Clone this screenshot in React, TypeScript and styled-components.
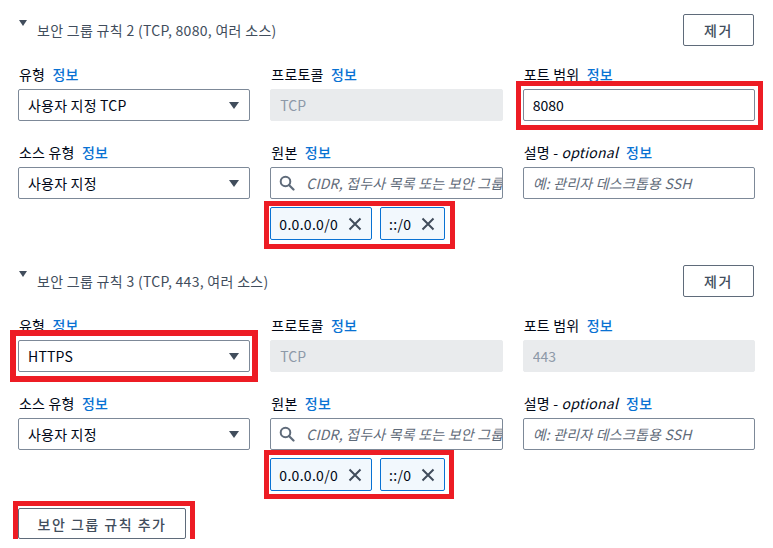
import React from "react";
import styled, { createGlobalStyle } from "styled-components";

const GlobalStyle = createGlobalStyle`
  html, body { margin: 0; padding: 0; background: #ffffff; }
  body {
    font-family: "Noto Sans CJK KR", "Noto Sans", sans-serif;
    color: #000716;
    -webkit-font-smoothing: antialiased;
  }
  * { box-sizing: border-box; }
`;

const Page = styled.div`
  width: 773px;
  padding: 14px 18px 0 18px;
`;

const Rule = styled.section<{ $top?: number }>`
  margin-top: ${(p) => p.$top ?? 0}px;
`;

const RuleHeader = styled.div`
  display: flex;
  align-items: center;
  justify-content: space-between;
  height: 32px;
`;

const TitleGroup = styled.div`
  display: flex;
  align-items: flex-start;
  gap: 10px;
  margin-left: 1px;
`;

const CaretIcon = styled.svg`
  display: block;
  flex: none;
  margin-top: 1px;
`;

const Title = styled.span`
  font-size: 14px;
  line-height: 22px;
  letter-spacing: 0.3px;
  color: #414d5c;
`;

const OutlineButton = styled.button`
  height: 32px;
  padding: 0;
  border: 1px solid #5f6b7a;
  border-radius: 2px;
  background: #ffffff;
  font-family: inherit;
  font-size: 14px;
  font-weight: 500;
  letter-spacing: 1.5px;
  word-spacing: 0px;
  white-space: nowrap;
  color: #414d5c;
  display: inline-flex;
  align-items: center;
  justify-content: center;
`;

const RemoveButton = styled(OutlineButton)`
  margin-right: 1px;
  width: 71px;
`;

const AddButton = styled(OutlineButton)`
  width: 168px;
  height: 31px;
`;

const FieldGrid = styled.div<{ $top: number }>`
  display: grid;
  grid-template-columns: repeat(3, 1fr);
  column-gap: 20px;
  margin-top: ${(p) => p.$top}px;
  align-items: start;
`;

const Field = styled.div`
  display: flex;
  flex-direction: column;
  min-width: 0;
`;

const Label = styled.div`
  font-size: 14px;
  line-height: 20px;
  margin-bottom: 5px;
  color: #000716;
  white-space: nowrap;
  margin-left: 1px;
  letter-spacing: 0.2px;
`;

const Optional = styled.i`
  font-style: italic;
  margin-right: 4px;
`;

const InfoLink = styled.a`
  color: #0972d3;
  font-weight: 500;
  text-decoration: none;
  margin-left: 4px;
`;

const Highlight = styled.div<{
  $t: number;
  $r: number;
  $b: number;
  $l: number;
  $w?: number;
  $fit?: boolean;
  $top?: number;
}>`
  position: relative;
  align-self: ${(p) => (p.$fit ? "flex-start" : "stretch")};
  margin-top: ${(p) => p.$top ?? 0}px;
  &::after {
    content: "";
    position: absolute;
    top: -${(p) => p.$t}px;
    right: -${(p) => p.$r}px;
    bottom: -${(p) => p.$b}px;
    left: -${(p) => p.$l}px;
    border: ${(p) => p.$w ?? 5}px solid #ed1c24;
    pointer-events: none;
  }
`;

const SelectBox = styled.div`
  height: 32px;
  border: 1px solid #7d8998;
  border-radius: 2px;
  background: #ffffff;
  padding: 0 10px 0 9px;
  display: flex;
  align-items: center;
  justify-content: space-between;
  font-size: 14px;
  letter-spacing: 0.2px;
  color: #000716;
`;

const ArrowIcon = styled.svg`
  display: block;
  flex: none;
`;

const TextInput = styled.input`
  display: block;
  width: 100%;
  height: 32px;
  border: 1px solid #7d8998;
  border-radius: 2px;
  background: #ffffff;
  padding: 0 9px;
  font-family: inherit;
  font-size: 14px;
  color: #000716;
  outline: none;
  &::placeholder {
    color: #5f6b7a;
    font-style: italic;
    letter-spacing: 0.2px;
  }
  &:disabled {
    background: #e9ebed;
    border-color: #e9ebed;
    color: #8d99a8;
  }
`;

const SearchBox = styled.div`
  height: 32px;
  border: 1px solid #7d8998;
  border-radius: 2px;
  background: #ffffff;
  padding: 0 0 0 8px;
  display: flex;
  align-items: center;
  gap: 11px;
  overflow: hidden;
`;

const SearchField = styled.input`
  flex: 1;
  min-width: 0;
  border: none;
  outline: none;
  padding: 0;
  height: 30px;
  font-family: inherit;
  font-size: 14px;
  background: transparent;
  &::placeholder {
    color: #5f6b7a;
    font-style: italic;
    letter-spacing: 0.2px;
  }
`;

const TokenList = styled.div`
  display: flex;
  gap: 8px;
`;

const Token = styled.div`
  height: 33px;
  border: 1px solid #0972d3;
  border-radius: 2px;
  background: #f2f8fd;
  padding: 0 9px 0 8px;
  display: flex;
  align-items: center;
  gap: 10px;
  font-size: 14px;
  letter-spacing: 0.3px;
  color: #000716;
`;

const Footer = styled.div`
  display: flex;
  margin-top: 17px;
`;

const Caret = () => (
  <CaretIcon width="8" height="6" viewBox="0 0 8 6">
    <polygon points="0,0 8,0 4,6" fill="#414d5c" />
  </CaretIcon>
);

const Arrow = () => (
  <ArrowIcon width="10" height="7" viewBox="0 0 10 7">
    <polygon points="0,0 10,0 5,7" fill="#414d5c" />
  </ArrowIcon>
);

const SearchIcon = () => (
  <svg width="16" height="16" viewBox="0 0 16 16" style={{ flex: "none" }}>
    <circle cx="6.5" cy="6.5" r="4.8" fill="none" stroke="#5f6b7a" strokeWidth="2" />
    <line x1="10" y1="10" x2="14.5" y2="14.5" stroke="#5f6b7a" strokeWidth="2.2" strokeLinecap="round" />
  </svg>
);

const CloseIcon = () => (
  <svg width="14" height="14" viewBox="0 0 14 14" style={{ flex: "none" }}>
    <path d="M1.5 1.5 L12.5 12.5 M12.5 1.5 L1.5 12.5" stroke="#414d5c" strokeWidth="2" fill="none" />
  </svg>
);

const Info = () => <InfoLink>정보</InfoLink>;

const Tokens = () => (
  <TokenList>
    <Token>
      0.0.0.0/0
      <CloseIcon />
    </Token>
    <Token>
      ::/0
      <CloseIcon />
    </Token>
  </TokenList>
);

type RuleProps = {
  num: number;
  summary: string;
  type: string;
  port: string;
  portEditable: boolean;
  highlightType?: boolean;
  highlightPort?: boolean;
  tokenBox: { t: number; r: number; b: number; l: number };
  top?: number;
};

const RuleBlock = ({
  num,
  summary,
  type,
  port,
  portEditable,
  highlightType,
  highlightPort,
  tokenBox,
  top,
}: RuleProps) => {
  const typeSelect = (
    <SelectBox>
      <span>{type}</span>
      <Arrow />
    </SelectBox>
  );
  const portInput = portEditable ? (
    <TextInput defaultValue={port} />
  ) : (
    <TextInput value={port} disabled readOnly />
  );
  return (
    <Rule $top={top}>
      <RuleHeader>
        <TitleGroup>
          <Caret />
          <Title>
            보안 그룹 규칙 {num} {summary}
          </Title>
        </TitleGroup>
        <RemoveButton>제거</RemoveButton>
      </RuleHeader>

      <FieldGrid $top={18}>
        <Field>
          <Label>
            유형 <Info />
          </Label>
          {highlightType ? (
            <Highlight $t={10} $r={8} $b={10} $l={8} $w={6}>
              {typeSelect}
            </Highlight>
          ) : (
            typeSelect
          )}
        </Field>
        <Field>
          <Label>
            프로토콜 <Info />
          </Label>
          <TextInput value="TCP" disabled readOnly />
        </Field>
        <Field>
          <Label>
            포트 범위 <Info />
          </Label>
          {highlightPort ? (
            <Highlight $t={8} $r={8} $b={9} $l={7}>
              {portInput}
            </Highlight>
          ) : (
            portInput
          )}
        </Field>
      </FieldGrid>

      <FieldGrid $top={21}>
        <Field>
          <Label>
            소스 유형 <Info />
          </Label>
          <SelectBox>
            <span>사용자 지정</span>
            <Arrow />
          </SelectBox>
        </Field>
        <Field>
          <Label>
            원본 <Info />
          </Label>
          <SearchBox>
            <SearchIcon />
            <SearchField placeholder="CIDR, 접두사 목록 또는 보안 그룹" />
          </SearchBox>
          <Highlight $fit $top={8} $t={tokenBox.t} $r={tokenBox.r} $b={tokenBox.b} $l={tokenBox.l}>
            <Tokens />
          </Highlight>
        </Field>
        <Field>
          <Label>
            설명 - <Optional>optional</Optional>
            <Info />
          </Label>
          <TextInput placeholder="예: 관리자 데스크톱용 SSH" />
        </Field>
      </FieldGrid>
    </Rule>
  );
};

export default function App() {
  return (
    <>
      <GlobalStyle />
      <Page>
        <RuleBlock
          num={2}
          summary="(TCP, 8080, 여러 소스)"
          type="사용자 지정 TCP"
          port="8080"
          portEditable
          highlightPort
          tokenBox={{ t: 6, r: 10, b: 9, l: 6 }}
        />
        <RuleBlock
          num={3}
          summary="(TCP, 443, 여러 소스)"
          type="HTTPS"
          port="443"
          portEditable={false}
          highlightType
          tokenBox={{ t: 8, r: 9, b: 8, l: 6 }}
          top={25}
        />
        <Footer>
          <Highlight $fit $t={7} $r={9} $b={5} $l={5}>
            <AddButton>보안 그룹 규칙 추가</AddButton>
          </Highlight>
        </Footer>
      </Page>
    </>
  );
}
